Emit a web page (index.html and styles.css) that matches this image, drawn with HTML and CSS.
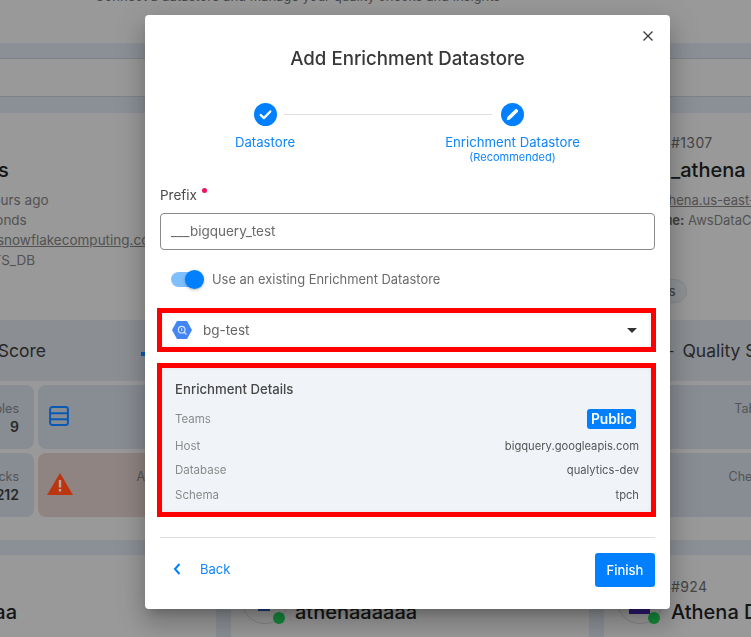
FILE: index.html
```html
<!DOCTYPE html>
<html lang="en">
<head>
<meta charset="utf-8">
<title>Add Enrichment Datastore</title>
<link rel="stylesheet" href="styles.css">
</head>
<body>
<div class="app">
  <header class="topbar"><span class="topbar-text">Connect a datastore and manage your quality checks and insights</span></header>
  <div class="searchbar"></div>
  <main class="cards">
    <article class="card card-left">
      <div class="card-head">
        <div class="ds-id">#1305</div>
        <div class="ds-name">cov_stats</div>
        <div class="ds-line">Profiled 7 hours ago</div>
        <div class="ds-line">Took 12 seconds</div>
        <div class="ds-line"><u>ab12345.us.snowflakecomputing.com</u></div>
        <div class="ds-line">COVID_STATS_DB</div>
      </div>
      <div class="score"><span class="score-title">Quality Score</span><svg class="score-icon" viewBox="0 0 10 10"><path d="M0 10V6h4V2h4v8z"/></svg></div>
      <div class="tiles">
        <div class="tile"><span class="tile-label">Tables</span><span class="tile-num">9</span></div>
        <div class="tile"><svg class="tile-icon" viewBox="0 0 22 22"><rect x="1.2" y="1.2" width="19.6" height="19.6" rx="2.5" fill="none" stroke="#0a5ab4" stroke-width="2.2"/><path d="M1 8h20M1 14.500h20" stroke="#0a5ab4" stroke-width="2.2"/></svg></div>
        <div class="tile"><span class="tile-label">Checks</span><span class="tile-num">212</span></div>
        <div class="tile tile-alert"><svg class="tile-icon warn" viewBox="0 0 26 22"><path d="M13 0 26 22H0z" fill="#bb3510"/><path d="M11.800 7h2.400v7.500h-2.400zM11.800 16h2.400v2.500h-2.400z" fill="#b5a5a0"/></svg><span class="tile-label">Anomalies</span></div>
      </div>
    </article>
    <article class="card">
      <div class="card-head"></div>
      <div class="score"></div>
      <div class="tiles"><div class="tile"></div><div class="tile"></div><div class="tile"></div><div class="tile"></div></div>
    </article>
    <article class="card card-right">
      <div class="card-head">
        <div class="ds-id">#1307</div>
        <div class="ds-name">_athena</div>
        <div class="ds-line ds-url"><u>athena.us-east-1.amazonaws.com</u></div>
        <div class="ds-line ds-meta"><b>Catalogue:</b> AwsDataCatalog</div>
        <span class="tag">Tags</span>
      </div>
      <div class="score"><span class="score-dash">-</span><span class="score-title">Quality Score</span></div>
      <div class="tiles">
        <div class="tile"><span class="tile-label">Tables</span></div>
        <div class="tile"></div>
        <div class="tile"><span class="tile-label">Checks</span></div>
        <div class="tile"></div>
      </div>
    </article>
    <article class="card card-low low-a">
      <div class="avatar"></div>
      <div><div class="ds-id">#922</div><div class="ds-name">athenaaa</div></div>
    </article>
    <article class="card card-low low-b">
      <div class="avatar"><span class="logo logo-blue"></span><span class="dot"></span></div>
      <div><div class="ds-id">#923</div><div class="ds-name">athenaaaaaa</div></div>
    </article>
    <article class="card card-low low-c">
      <div class="avatar"><span class="logo logo-purple"></span><span class="dot"></span></div>
      <div><div class="ds-id">#924</div><div class="ds-name">Athena DS</div></div>
    </article>
  </main>
</div>
<div class="scrim"></div>
<section class="modal">
  <button class="close" aria-label="Close"><svg viewBox="0 0 12 12"><path d="M1.500 1.500l9 9M10.500 1.500l-9 9"/></svg></button>
  <h1 class="modal-title">Add Enrichment Datastore</h1>
  <div class="stepper">
    <div class="step">
      <span class="step-dot"><svg viewBox="0 0 24 24"><path d="M7 12.500l3.300 3.300 6.700-7" fill="none" stroke="#fff" stroke-width="2.400" stroke-linecap="round" stroke-linejoin="round"/></svg></span>
      <span class="step-name">Datastore</span>
    </div>
    <span class="step-line"></span>
    <div class="step step-wide">
      <span class="step-dot"><svg viewBox="0 0 24 24"><path d="M6 18l.7-3.300 8.300-8.300a1 1 0 0 1 1.400 0l1.200 1.200a1 1 0 0 1 0 1.400l-8.300 8.300z" fill="#fff"/></svg></span>
      <span class="step-name">Enrichment Datastore</span>
      <span class="step-note">(Recommended)</span>
    </div>
  </div>
  <label class="field-label">Prefix<span class="req"></span></label>
  <div class="input">___bigquery_test</div>
  <div class="switch-row">
    <span class="switch"><span class="knob"></span></span>
    <span class="switch-label">Use an existing Enrichment Datastore</span>
  </div>
  <div class="outlined outlined-select">
    <div class="select">
      <svg class="bq" viewBox="0 0 20 20"><path d="M5 1h10l5 9-5 9H5L0 10z" fill="#4285f4"/><circle cx="9.700" cy="9.700" r="3.300" fill="none" stroke="#d5e3fc" stroke-width="1.200"/><path d="M12 12l2.500 2.500" stroke="#d5e3fc" stroke-width="1.300"/><path d="M9.700 8v3" stroke="#d5e3fc"/></svg>
      <span class="select-value">bg-test</span>
      <span class="caret"></span>
    </div>
  </div>
  <div class="outlined outlined-details">
    <div class="details">
      <h2 class="details-title">Enrichment Details</h2>
      <div class="detail-row row-teams"><span class="detail-key">Teams</span><span class="badge">Public</span></div>
      <div class="detail-row row-host"><span class="detail-key">Host</span><span class="detail-val">bigquery.googleapis.com</span></div>
      <div class="detail-row"><span class="detail-key">Database</span><span class="detail-val">qualytics-dev</span></div>
      <div class="detail-row row-schema"><span class="detail-key">Schema</span><span class="detail-val">tpch</span></div>
    </div>
  </div>
  <footer class="modal-foot">
    <button class="back"><svg viewBox="0 0 10 14"><path d="M7.500 2 3 7l4.500 5" fill="none" stroke="#0080ff" stroke-width="2"/></svg><span>Back</span></button>
    <button class="finish">Finish</button>
  </footer>
</section>
</body>
</html>
```
FILE: styles.css
```css
* { box-sizing: border-box; }
html, body { margin: 0; height: 100%; }
body {
  overflow: hidden;
  background: #e8f1fa;
  font-family: Inter, "Noto Sans", sans-serif;
  color: #2f3133;
}
.app { height: 637px; overflow: hidden; }
.topbar { height: 43px; background: #fff; padding-left: 95px; overflow: hidden; }
.topbar-text { display: block; margin-top: -12px; font-size: 13px; line-height: 16px; color: #777; white-space: nowrap; }
.searchbar { height: 39px; margin: 15px 0 16px; background: #fff; border-top: 1px solid #d4dbe2; border-bottom: 1px solid #d4dbe2; }
.cards {
  display: grid;
  grid-template-columns: repeat(3, 358px);
  grid-auto-rows: min-content;
  column-gap: 15px;
  row-gap: 15px;
  margin-left: -142px;
}
.card { background: #fff; height: 427px; overflow: hidden; }
.card-low { height: 120px; padding-top: 23px; display: flex; align-items: flex-start; gap: 8px; }
.low-a { padding-left: 17px; }
.low-b { padding-left: 11px; gap: 7px; }
.low-c { padding-left: 13px; }
.card-head { height: 207px; padding: 21px 0 0 67px; }
.card-left .card-head { padding: 21px 0 0 62px; }
.ds-id { font-size: 14px; line-height: 18px; color: #737373; letter-spacing: .4px; }
.ds-name { font-size: 20px; line-height: 28px; font-weight: 500; color: #242526; white-space: nowrap; margin: 2px 0 0; }
.card-head .ds-name { margin: 4px 0 6px; }
.ds-line { font-size: 13px; line-height: 20px; color: #8a8a8a; white-space: nowrap; }
.card-left .ds-line { font-size: 13.500px; }
.ds-line b { font-weight: 700; color: #6f6f6f; }
.ds-url { margin-left: -14px; }
.ds-meta { margin-left: -56px; }
.tag { display: inline-block; margin: 49px 0 0 -36px; padding: 3px 10px; border-radius: 12px; background: #f1f5f9; border: 1px solid #e0e6ec; font-size: 13px; line-height: 16px; color: #666; }
.score { height: 61px; background: #e8edf6; display: flex; align-items: center; padding-left: 77px; gap: 12px; }
.card-right .score { padding-left: 64px; gap: 8px; }
.score-title { font-size: 17.500px; color: #444; white-space: nowrap; }
.score-dash { font-size: 14px; color: #444; }
.score-icon { width: 10px; height: 10px; fill: #0a5ab4; margin-left: auto; margin-right: 65px; position: relative; z-index: 1; }
.tiles { display: grid; grid-template-columns: 176px 178px; gap: 4px; margin-top: 4px; }
.tile { height: 64px; background: #e3eaf6; border-radius: 8px; padding: 15px 15px 0 0; position: relative; display: flex; flex-direction: column; align-items: flex-end; }
.card-right .tile { padding-right: 7px; }
.tile-label { font-size: 12.500px; line-height: 17px; color: #8a8d92; }
.tile-num { font-size: 14px; line-height: 19px; font-weight: 600; color: #444; }
.tile-alert { background: #efdcd8; }
.tile-icon { position: absolute; z-index: 1; left: 11px; top: 21px; width: 20px; height: 20px; }
.tile-icon.warn { left: 9px; top: 20px; width: 26px; height: 22px; }
.tile-alert .tile-label { margin-right: 3px; }
.avatar { width: 46px; height: 46px; border-radius: 50%; border: 1px solid #ddd; position: relative; flex: none; }
.logo { position: absolute; }
.logo-blue { left: 15px; top: 18px; width: 12px; height: 14px; background: #2563c9; }
.logo-purple { left: 11px; top: 12px; width: 21px; height: 23px; background: #4a2bbd; }
.dot { position: absolute; z-index: 1; left: 30px; top: 33px; width: 12px; height: 12px; border-radius: 50%; background: #14873a; }

.scrim { position: fixed; inset: 0; background: rgba(0, 0, 0, .4); }

.modal {
  position: fixed;
  z-index: 2;
  left: 145px;
  top: 15px;
  width: 525px;
  height: 594px;
  background: #fff;
  border-radius: 4px;
  padding: 0 15px;
  box-shadow: 0 8px 10px -5px rgba(0,0,0,.2), 0 16px 24px 2px rgba(0,0,0,.14), 0 6px 30px 5px rgba(0,0,0,.12);
  color: #3c3c3c;
}
.close { position: absolute; top: 15px; right: 16px; width: 12px; height: 12px; border: 0; padding: 0; background: none; display: block; }
.close svg { display: block; width: 12px; height: 12px; }
.close path { stroke: #3a3a3a; stroke-width: 1.300; fill: none; }
.modal-title { margin: 0; padding-top: 29px; text-align: center; font-size: 18.700px; line-height: 30px; font-weight: 500; color: #383838; }
.stepper { display: flex; align-items: flex-start; margin-top: 29px; padding-left: 74px; height: 69px; }
.step { display: flex; flex-direction: column; align-items: center; width: 62px; flex: none; }
.step-wide { width: 135px; margin-left: -47px; }
.step-dot { width: 23px; height: 23px; border-radius: 50%; background: #0080ff; display: block; flex: none; }
.step-dot svg { display: block; width: 23px; height: 23px; }
.step-name { margin-top: 7px; font-size: 13.200px; line-height: 18px; color: #0f85fb; white-space: nowrap; }
.step-note { font-size: 11px; line-height: 13px; color: #0f85fb; white-space: nowrap; }
.step-line { width: 208px; height: 1px; background: #dedede; margin: 11px 0 0 -12px; flex: none; }
.field-label { display: block; margin-top: 13px; font-size: 13.500px; line-height: 20px; color: #4a4a4a; }
.req { display: inline-block; width: 5px; height: 5px; border-radius: 50%; background: #f0125f; margin-left: 5px; vertical-align: 7px; }
.input { height: 37px; margin-top: 8px; border: 1px solid #8a8a8a; border-radius: 4px; padding-left: 10px; font-size: 13.500px; line-height: 35px; color: #6b6b6b; }
.switch-row { display: flex; align-items: center; gap: 9px; margin: 17px 0 0 11px; height: 24px; }
.switch { width: 32px; height: 15px; border-radius: 8px; background: #7fbfff; position: relative; flex: none; }
.knob { position: absolute; right: -1px; top: -2px; width: 19px; height: 19px; border-radius: 50%; background: #0080ff; box-shadow: 0 1px 3px rgba(0,0,0,.3); }
.switch-label { font-size: 12.900px; color: #6b6b6b; white-space: nowrap; }
.outlined { border: 5px solid #f00; margin-left: -3px; margin-right: -1px; }
.outlined-select { margin-top: 17px; height: 44px; }
.select { height: 34px; display: flex; align-items: center; padding: 0 14px 0 10px; background: #fff; box-shadow: inset 0 0 4px rgba(0,0,0,.08); }
.bq { width: 20px; height: 20px; flex: none; }
.select-value { margin-left: 11px; font-size: 13.500px; color: #666; }
.caret { margin-left: auto; width: 0; height: 0; border-left: 5px solid transparent; border-right: 5px solid transparent; border-top: 5px solid #333; }
.outlined-details { margin-top: 11px; height: 154px; }
.details { height: 144px; background: #f0f4f9; padding: 12px 12px 0 13px; box-shadow: inset 0 0 4px rgba(0,0,0,.06); }
.details-title { margin: 0 0 9px; font-size: 13.200px; line-height: 18px; font-weight: 500; color: #484848; }
.detail-row { display: flex; justify-content: space-between; align-items: center; height: 24px; font-size: 11.500px; }
.row-teams { padding-right: 3px; }
.row-host { margin-top: 3px; }
.row-schema { margin-top: 1px; }
.detail-key { color: #8a8a8a; }
.detail-val { color: #555; font-size: 11.200px; }
.badge { width: 49px; text-align: center; border-radius: 3px; background: #0080ff; color: #fff; font-size: 13.800px; line-height: 20px; font-weight: 600; }
.modal-foot { margin-top: 20px; border-top: 1px solid #dedede; padding-top: 15px; display: flex; justify-content: space-between; align-items: center; }
.back { display: flex; align-items: center; gap: 18px; margin-left: 12px; border: 0; padding: 0 0 2px; background: none; font: inherit; font-size: 13px; color: #0f85fb; }
.back svg { width: 10px; height: 14px; }
.finish { width: 60px; height: 34px; border: 0; border-radius: 3px; background: #0080ff; color: #fff; font: inherit; font-size: 13px; font-weight: 500; }
```
